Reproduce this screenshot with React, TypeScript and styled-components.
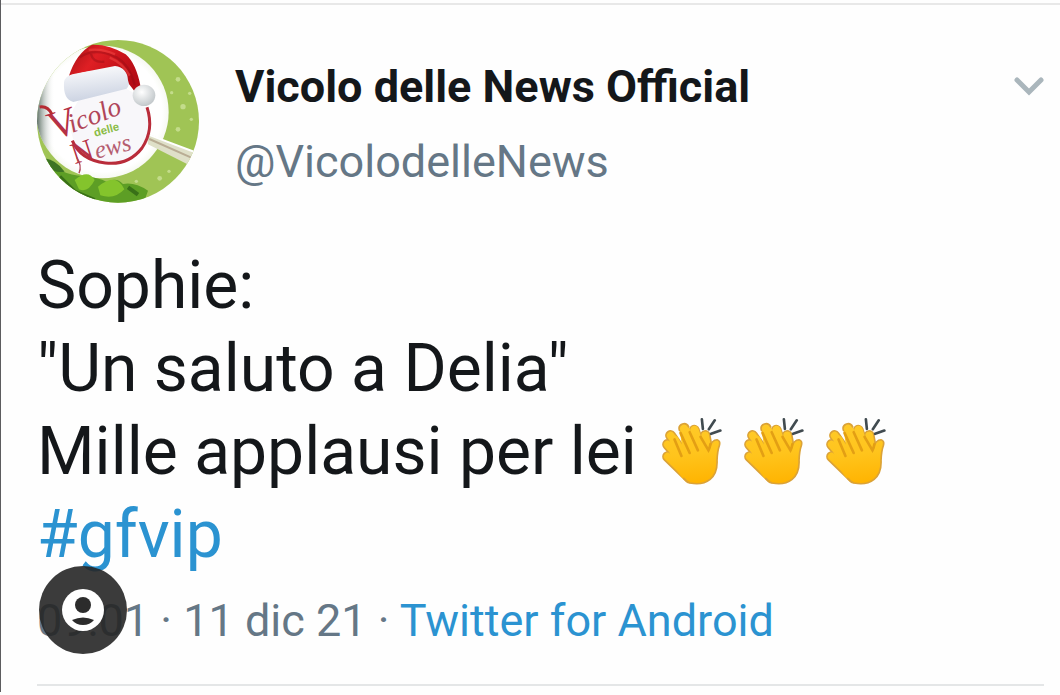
import React from "react";
import styled, { createGlobalStyle } from "styled-components";

const GlobalStyle = createGlobalStyle`
  *, *::before, *::after { box-sizing: border-box; }
  body {
    margin: 0;
    background: #fefefe;
    font-family: Roboto, "Liberation Sans", sans-serif;
    color: #14171a;
  }
`;

const Page = styled.main`
  padding: 3px 0 6px;
  border-left: 1px solid #5c5c5f;
`;

const Tweet = styled.article`
  border-top: 2px solid #e8e8e8;
  padding: 35px 16px 0 36px;
`;

const Header = styled.header`
  display: flex;
  align-items: flex-start;
  gap: 36px;
`;

const AvatarImage = styled.svg`
  flex: none;
  width: 162px;
  height: 163px;
`;

const Author = styled.div`
  flex: 1;
  min-width: 0;
  padding-top: 9px;
`;

const Name = styled.h1`
  margin: 0;
  font-size: 45px;
  line-height: 75px;
  font-weight: 700;
`;

const Handle = styled.p`
  margin: 0;
  font-size: 45px;
  line-height: 75px;
  color: #657786;
`;

const MenuButton = styled.button`
  display: flex;
  margin-top: 36px;
  padding: 0;
  border: 0;
  background: none;
  color: #aab6bc;
  cursor: pointer;
`;

const Body = styled.p`
  margin: 41px 0 0;
  font-size: 66px;
  line-height: 83px;
`;

const Line = styled.span`
  display: flex;
  align-items: center;
  white-space: pre-wrap;
`;

const Claps = styled.span`
  display: inline-flex;
  gap: 22px;
  margin-left: 25px;
`;

const TextLink = styled.a`
  color: #2b93d1;
  text-decoration: none;
`;

const Footer = styled.footer`
  position: relative;
  margin-top: 7px;
  padding-bottom: 26px;
  border-bottom: 2px solid #e4e6e7;
  font-size: 45px;
  line-height: 75px;
  color: #657786;
`;

const ProfileButton = styled.button`
  position: absolute;
  left: 2px;
  top: -17px;
  display: flex;
  align-items: center;
  justify-content: center;
  width: 88px;
  height: 88px;
  padding: 0;
  border: 0;
  border-radius: 50%;
  background: rgba(38, 38, 38, 0.9);
  cursor: pointer;
`;

function Avatar() {
  return (
    <AvatarImage viewBox="52 30 486 489" role="img" aria-label="Vicolo delle News">
      <defs>
        <clipPath id="round"><ellipse cx="295" cy="274" rx="243" ry="244" /></clipPath>
        <linearGradient id="hat" x1="0" y1="0" x2="1" y2="0.5">
          <stop offset="0" stopColor="#9f1015" />
          <stop offset="0.4" stopColor="#df1f24" />
          <stop offset="0.7" stopColor="#c9141b" />
          <stop offset="1" stopColor="#b50d16" />
        </linearGradient>
        <linearGradient id="fur" x1="0" y1="0" x2="0.2" y2="1">
          <stop offset="0" stopColor="#ffffff" />
          <stop offset="1" stopColor="#ccd3e2" />
        </linearGradient>
        <radialGradient id="pom" cx="0.4" cy="0.35" r="0.7">
          <stop offset="0" stopColor="#ffffff" />
          <stop offset="1" stopColor="#bfc5c8" />
        </radialGradient>
        <radialGradient id="plate">
          <stop offset="0.9" stopColor="#ffffff" />
          <stop offset="1" stopColor="#f7f9f2" />
        </radialGradient>
        <linearGradient id="rim" x1="0" y1="0" x2="1" y2="0">
          <stop offset="0" stopColor="#4f6358" />
          <stop offset="0.14" stopColor="#ffffff" stopOpacity="0" />
        </linearGradient>
      </defs>
      <g clipPath="url(#round)">
        <rect x="50" y="28" width="490" height="494" fill="#a0c455" />
        <g fill="#c3dc8b">
          <circle cx="475" cy="148" r="7" /><circle cx="490" cy="230" r="8" />
          <circle cx="456" cy="188" r="5" /><circle cx="475" cy="298" r="7" />
          <circle cx="510" cy="190" r="5" /><circle cx="420" cy="445" r="7" />
          <circle cx="448" cy="424" r="5" /><circle cx="515" cy="268" r="5" />
          <circle cx="350" cy="454" r="5" />
        </g>
        <circle cx="248" cy="246" r="199" fill="url(#plate)" />
        <circle cx="248" cy="246" r="199" fill="url(#rim)" />
        <path d="M75 385 Q120 435 190 438 Q235 442 262 456 Q290 440 310 462 Q345 455 385 482 L370 525 H100 Z" fill="#5d9e25" />
        <path d="M75 385 Q110 390 135 425 Q105 430 85 412 Z" fill="#3d7424" />
        <path d="M165 450 Q205 415 225 450 Q205 490 178 478 Z M235 470 Q290 425 314 478 Q285 510 242 496 Z" fill="#84c42c" />
        <path d="M120 440 L165 485 L225 510 M325 472 L355 494" stroke="#397018" strokeWidth="12" fill="none" />
        <path d="M382 310 L530 370 L508 405 L385 343 Z" fill="#dfe0c8" />
        <path d="M389 327 L520 385" stroke="#b9ad94" strokeWidth="6" />
        <path d="M384 313 L525 366" stroke="#ffffff" strokeWidth="6" />
        <circle cx="270" cy="283" r="118" fill="#f8f7fa" />
        <path d="M382 232 Q404 300 367 354 Q326 407 257 399 Q182 390 158 332" fill="none" stroke="#b92c3a" strokeWidth="9" />
        <path d="M147 140 Q169 70 217 44 Q269 42 318 73 Q350 101 363 171 L344 183 L309 137 Q228 107 147 140 Z" fill="url(#hat)" />
        <path d="M180 82 Q226 50 292 83 Q330 104 345 166 M214 72 Q220 99 254 95" fill="none" stroke="#8f0c14" strokeWidth="7" opacity="0.4" />
        <path d="M207 60 Q248 55 286 73 M270 83 Q309 99 330 137" fill="none" stroke="#f34a46" strokeWidth="7" opacity="0.5" />
        <path d="M133 157 Q136 139 158 133 L286 108 Q323 113 325 151 Q331 166 321 176 L161 216 Q130 209 133 157 Z" fill="url(#fur)" />
        <ellipse cx="373" cy="196" rx="34" ry="32" fill="url(#pom)" />
        <g fontFamily="'Liberation Serif', serif" fill="#b53145">
          <text transform="translate(99 331) rotate(-18)" fontSize="120">V</text>
          <text transform="translate(157 309) rotate(-21)" fontSize="82" fontStyle="italic" fill="#b04659">icolo</text>
          <text transform="translate(165 403) rotate(-18)" fontSize="90">N</text>
          <text transform="translate(231 386) rotate(-14)" fontSize="74" fontStyle="italic" fill="#b55d70">ews</text>
        </g>
        <path d="M60 231 Q84 227 97 253" fill="none" stroke="#b52b33" strokeWidth="9" />
        <path d="M178 430 Q188 407 171 382" fill="none" stroke="#b04659" strokeWidth="4" />
        <text transform="translate(226 320) rotate(-15)" fontFamily="'Liberation Sans', sans-serif" fontWeight="700" fontSize="34" fill="#8abc45">delle</text>
      </g>
    </AvatarImage>
  );
}

function Clap() {
  const back = "M83 170 L150 235 M83 133 L145 205 M92 106 L150 190 M164 90 L185 155 M197 106 L206 155";
  return (
    <svg width="60" height="69" viewBox="66 51 182 207" role="img" aria-label="applauso">
      <defs>
        <linearGradient id="skin" gradientUnits="userSpaceOnUse" x1="140" y1="70" x2="160" y2="255">
          <stop offset="0" stopColor="#ffca28" />
          <stop offset="0.5" stopColor="#ffc41c" />
          <stop offset="1" stopColor="#ffb300" />
        </linearGradient>
      </defs>
      <g fill="none" strokeLinecap="round" strokeLinejoin="round">
        <path d={back} stroke="#dba237" strokeWidth="33" />
        <path d={back} stroke="url(#skin)" strokeWidth="23" />
      </g>
      <path d="M120 92 Q114 76 128 71 Q141 67 147 80 L154 94 Q150 80 161 77 Q172 74 177 87 L188 119 Q184 98 196 95 Q207 94 207 108 L210 143 Q217 119 233 119 Q244 122 240 136 Q234 153 233 181 Q235 220 212 239 Q188 258 151 250 Q133 246 112 213 L91 164 Q84 145 96 143 L103 145 L94 119 Q91 104 104 105 Q113 106 119 120 L126 134 Z" fill="url(#skin)" />
      <path d="M119 91 Q114 76 128 71 Q141 67 147 80 M210 143 Q217 119 233 119 Q244 122 240 136 Q234 153 233 181 Q235 220 212 239 Q188 258 151 250 Q141 247 132 236" fill="none" stroke="#dba237" strokeWidth="5" strokeLinecap="round" />
      <path d="M104 118 L125 168 M122 98 L150 159 M150 96 L175 151 M183 110 L207 151 Q211 144 213 132" fill="none" stroke="#e39f14" strokeWidth="8" strokeLinecap="round" />
      <path d="M187 57 L190 86 M226 60 L208 87 M243 91 L215 101" fill="none" stroke="#414b50" strokeWidth="8" strokeLinecap="round" />
    </svg>
  );
}

export default function App() {
  return (
    <>
      <GlobalStyle />
      <Page>
        <Tweet>
          <Header>
            <Avatar />
            <Author>
              <Name>Vicolo delle News Official</Name>
              <Handle>@VicolodelleNews</Handle>
            </Author>
            <MenuButton aria-label="Altro">
              <svg width="30" height="22" viewBox="0 0 30 22" fill="none" stroke="currentColor" strokeWidth="5" strokeLinecap="round">
                <path d="M3 4 L15 16 L27 4" />
              </svg>
            </MenuButton>
          </Header>
          <Body>
            <Line>Sophie:</Line>
            <Line>"Un saluto a Delia"</Line>
            <Line>
              Mille applausi per lei
              <Claps><Clap /><Clap /><Clap /></Claps>
            </Line>
            <Line><TextLink href="#gfvip">#gfvip</TextLink></Line>
          </Body>
          <Footer>
            09:01 · 11 dic 21 · <TextLink href="#android">Twitter for Android</TextLink>
            <ProfileButton aria-label="Persone taggate">
              <svg width="42" height="42" viewBox="0 0 42 42">
                <circle cx="21" cy="21" r="21" fill="#fff" />
                <circle cx="21" cy="16" r="8" fill="#2c2c2c" />
                <path d="M10 31 Q21 26 32 31 Q28 36 21 36 Q14 36 10 31 Z" fill="#2c2c2c" />
              </svg>
            </ProfileButton>
          </Footer>
        </Tweet>
      </Page>
    </>
  );
}
